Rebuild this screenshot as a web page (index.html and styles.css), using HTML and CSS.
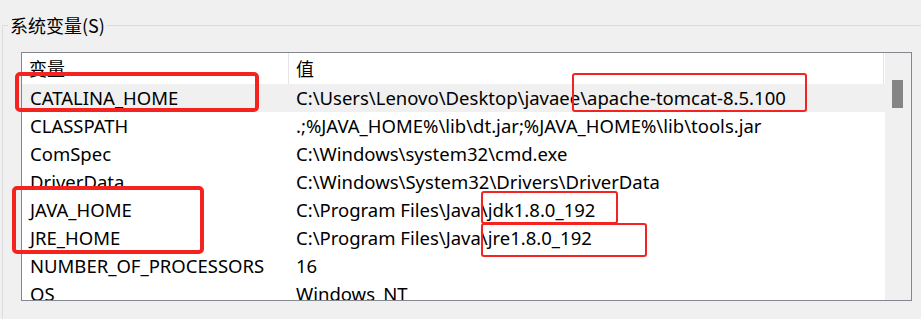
FILE: index.html
```html
<!DOCTYPE html>
<html lang="zh-CN">
<head>
    <meta charset="utf-8">
    <title>系统变量</title>
    <link rel="stylesheet" href="styles.css">
</head>
<body>
    <div class="group">
        <div class="group-title">系统变量(S)</div>

        <div class="list">
            <div class="list-main">
                <div class="list-head">
                    <div class="col-name">变量</div>
                    <div class="col-value">值</div>
                </div>

                <div class="row selected">
                    <div class="col-name">CATALINA_HOME</div>
                    <div class="col-value">C:\Users\Lenovo\Desktop\javaee\apache-tomcat-8.5.100</div>
                </div>
                <div class="row">
                    <div class="col-name">CLASSPATH</div>
                    <div class="col-value">.;%JAVA_HOME%\lib\dt.jar;%JAVA_HOME%\lib\tools.jar</div>
                </div>
                <div class="row">
                    <div class="col-name">ComSpec</div>
                    <div class="col-value">C:\Windows\system32\cmd.exe</div>
                </div>
                <div class="row">
                    <div class="col-name">DriverData</div>
                    <div class="col-value">C:\Windows\System32\Drivers\DriverData</div>
                </div>
                <div class="row">
                    <div class="col-name">JAVA_HOME</div>
                    <div class="col-value">C:\Program Files\Java\jdk1.8.0_192</div>
                </div>
                <div class="row">
                    <div class="col-name">JRE_HOME</div>
                    <div class="col-value">C:\Program Files\Java\jre1.8.0_192</div>
                </div>
                <div class="row">
                    <div class="col-name">NUMBER_OF_PROCESSORS</div>
                    <div class="col-value">16</div>
                </div>
                <div class="row">
                    <div class="col-name">OS</div>
                    <div class="col-value">Windows_NT</div>
                </div>
            </div>

            <div class="scrollbar">
                <div class="thumb"></div>
            </div>
        </div>
    </div>

    <!-- red annotation boxes drawn over the screenshot -->
    <div class="mark thick mark-catalina"></div>
    <div class="mark thin mark-tomcat"></div>
    <div class="mark thick mark-java"></div>
    <div class="mark thin mark-jdk"></div>
    <div class="mark thin mark-jre"></div>
</body>
</html>
```

FILE: styles.css
```css
body {
    margin: 0;
    background: #f0f0f0;
    font-family: "Noto Sans", "Noto Sans CJK SC", sans-serif;
    font-size: 18.5px;
    color: #000;
    overflow: hidden;
}

.group {
    margin: 25px 0 0 2px;
    height: 294px;
    border-top: 1px solid #dcdcdc;
    border-left: 1px solid #dcdcdc;
}

.group-title {
    width: max-content;
    margin: -13px 0 0 5px;
    padding: 0 2px;
    background: #f0f0f0;
    font-family: "Noto Sans CJK SC", sans-serif;
    font-size: 18px;
    line-height: 24px;
}

.list {
    display: flex;
    box-sizing: border-box;
    width: 891px;
    height: 249px;
    margin: 15px 0 0 18px;
    border: 1px solid #828790;
    background: #fff;
    overflow: hidden;
}

.list-main {
    flex: 1;
    overflow: hidden;
}

.list-head,
.row {
    display: flex;
    white-space: nowrap;
}

.list-head {
    height: 31px;
    line-height: 31px;
    font-family: "Noto Sans CJK SC", sans-serif;
    font-size: 18px;
}

.row {
    height: 28px;
    line-height: 28px;
}

.row.selected {
    background: #f0f0f0;
}

.col-name {
    box-sizing: border-box;
    width: 267px;
    padding-left: 8px;
}

.col-value {
    flex: 1;
    padding-left: 7px;
}

.list-head .col-name {
    border-right: 1px solid #e5e5e5;
    padding-left: 7px;
}

.list-head .col-value {
    border-right: 1px solid #e5e5e5;
    margin-right: 1px;
}

.scrollbar {
    width: 26px;
    background: #f0f0f0;
}

.thumb {
    width: 11px;
    height: 28px;
    margin: 27px 0 0 7px;
    background: #858585;
}

.mark {
    position: absolute;
    box-sizing: border-box;
}

.mark.thick {
    border: 4px solid #f4231f;
    border-radius: 5px;
}

.mark.thin {
    border: 2px solid #f4231f;
    border-radius: 3px;
}

.mark-catalina {
    left: 15px;
    top: 72px;
    width: 244px;
    height: 40px;
}

.mark-tomcat {
    left: 572px;
    top: 73px;
    width: 235px;
    height: 39px;
}

.mark-java {
    left: 12px;
    top: 186px;
    width: 192px;
    height: 68px;
}

.mark-jdk {
    left: 481px;
    top: 191px;
    width: 137px;
    height: 33px;
}

.mark-jre {
    left: 481px;
    top: 223px;
    width: 166px;
    height: 34px;
}
```
